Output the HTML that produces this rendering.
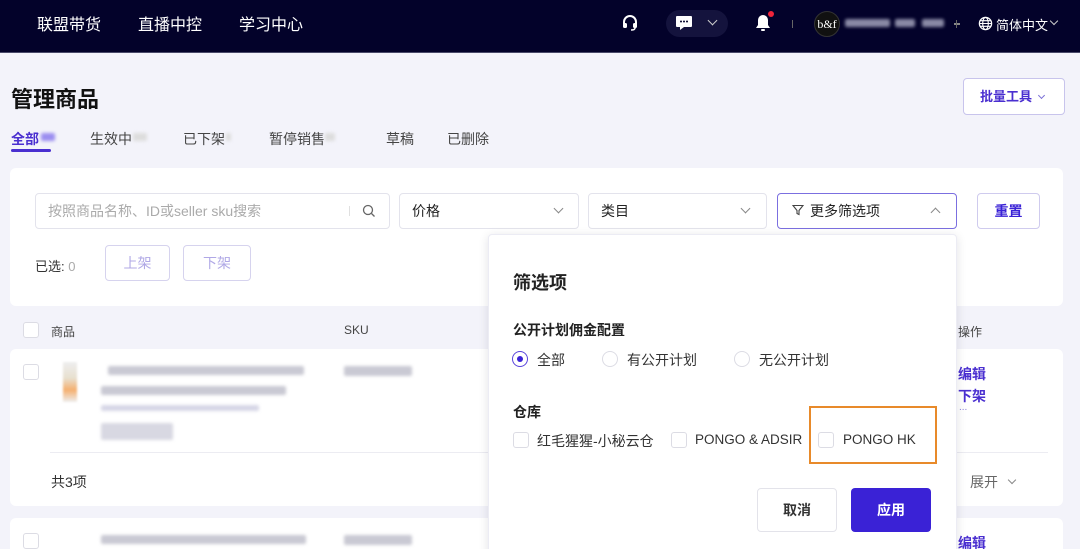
<!DOCTYPE html>
<html><head><meta charset="utf-8"><style>
*{box-sizing:border-box;margin:0;padding:0}
html,body{width:1080px;height:549px;overflow:hidden}
body{background:#f3f3fa;font-family:"Liberation Sans","Noto Sans CJK SC",sans-serif;color:#222;position:relative;font-size:14px}
.a{position:absolute;white-space:nowrap}
.nav{position:absolute;left:0;top:0;width:1080px;height:53px;background:#03022a;border-bottom:1px solid #4a4a6a}
.nav .t{color:#fff;font-size:16px;top:11px}
.card{position:absolute;background:#fff;border-radius:6px}
.inp{position:absolute;height:36px;border:1px solid #e3e3ec;border-radius:4px;background:#fff;font-size:14px;padding:0 12px;line-height:34px}
.btn{position:absolute;border:1px solid #d6d3ee;border-radius:4px;text-align:center;background:#fff}
.blur{position:absolute;background:#c9c9d3;border-radius:2px;filter:blur(1.5px)}
.cb{position:absolute;width:16px;height:16px;border:1px solid #dcdce4;border-radius:3px;background:#fff}
.rd{position:absolute;width:16px;height:16px;border:1px solid #dcdce4;border-radius:50%;background:#fff}
.chev{position:absolute;display:block;width:7px;height:7px;border-right:1.3px solid #888;border-bottom:1.3px solid #888;transform:rotate(45deg)}
.up{transform:rotate(225deg)}
</style></head><body>
<div class="nav">
<div class="a t" style="left:37px">联盟带货</div>
<div class="a t" style="left:138px">直播中控</div>
<div class="a t" style="left:239px">学习中心</div>
<svg class="a" style="left:622px;top:14px" width="16" height="18" viewBox="0 0 16 18"><path d="M2 10V8a6 6 0 0112 0v2" stroke="#fff" stroke-width="2" fill="none"/><rect x="1" y="9" width="4" height="5" rx="1.5" fill="#fff"/><rect x="11" y="9" width="4" height="5" rx="1.5" fill="#fff"/><path d="M13 14q0 2-4 2" stroke="#fff" stroke-width="1.5" fill="none"/></svg>
<div class="a" style="left:666px;top:10px;width:62px;height:27px;border-radius:14px;background:#14133d"></div>
<svg class="a" style="left:675px;top:15px" width="18" height="16" viewBox="0 0 18 16"><path d="M2 1h14a1 1 0 011 1v9a1 1 0 01-1 1H9l-4 3v-3H2a1 1 0 01-1-1V2a1 1 0 011-1z" fill="#fff"/><circle cx="6" cy="6.5" r="1" fill="#03022a"/><circle cx="9" cy="6.5" r="1" fill="#03022a"/><circle cx="12" cy="6.5" r="1" fill="#03022a"/></svg>
<span class="chev" style="left:709px;top:17px;border-color:#ccc"></span>
<svg class="a" style="left:755px;top:13px" width="16" height="20" viewBox="0 0 16 20"><path d="M8 2a5 5 0 015 5v5l2 3H1l2-3V7a5 5 0 015-5z" fill="#fff"/><rect x="6" y="16" width="4" height="2" rx="1" fill="#fff"/></svg>
<div class="a" style="left:768px;top:11px;width:6px;height:6px;border-radius:50%;background:#f0243a"></div>
<div class="a" style="left:792px;top:20px;width:1px;height:8px;background:#666"></div>
<div class="a" style="left:814px;top:11px;width:26px;height:26px;border-radius:50%;background:#111;border:1px solid #333;color:#fff;font-size:12px;text-align:center;line-height:24px;font-family:'Liberation Serif',serif">b&amp;f</div>
<div class="blur" style="left:845px;top:19px;width:45px;height:8px;background:#8a8aa6"></div>
<div class="blur" style="left:895px;top:19px;width:20px;height:8px;background:#8a8aa6"></div>
<div class="blur" style="left:922px;top:19px;width:22px;height:8px;background:#8a8aa6"></div>
<div class="a" style="left:954px;top:23px;width:6px;height:2px;background:#888"></div>
<div class="a" style="left:956px;top:20px;width:1px;height:8px;background:#666"></div>
<svg class="a" style="left:978px;top:16px" width="15" height="15" viewBox="0 0 16 16"><circle cx="8" cy="8" r="6.5" stroke="#fff" stroke-width="1.4" fill="none"/><ellipse cx="8" cy="8" rx="3" ry="6.5" stroke="#fff" stroke-width="1.2" fill="none"/><path d="M1.5 8h13M2.5 5h11M2.5 11h11" stroke="#fff" stroke-width="1.1"/></svg>
<div class="a" style="left:996px;top:15px;color:#fff;font-size:13px">简体中文</div>
<span class="chev" style="left:1051px;top:18px;width:6px;height:6px;border-color:#ccc"></span>
</div>

<div class="a" style="left:11px;top:82px;font-size:22px;font-weight:bold;color:#111">管理商品</div>
<div class="btn" style="left:963px;top:78px;width:102px;height:37px;line-height:35px;color:#4a2fd0;font-weight:bold;font-size:13px;border-color:#c8c4ec;text-align:left;padding-left:16px">批量工具</div>
<span class="chev" style="left:1039px;top:93px;width:5px;height:5px;border-color:#7a70d6"></span>
<div class="a" style="left:11px;top:129px;color:#4a2fd0;font-size:14px;font-weight:bold">全部</div>
<div class="blur" style="left:41px;top:133px;width:14px;height:8px;background:#9b8ef0"></div>
<div class="a" style="left:11px;top:149px;width:40px;height:3px;background:#4a2fd0;border-radius:2px"></div>
<div class="a" style="left:90px;top:129px;color:#444">生效中</div><div class="blur" style="left:133px;top:133px;width:14px;height:8px;background:#ddd"></div>
<div class="a" style="left:183px;top:129px;color:#444">已下架</div><div class="blur" style="left:226px;top:133px;width:5px;height:8px;background:#ddd"></div>
<div class="a" style="left:269px;top:129px;color:#444">暂停销售</div><div class="blur" style="left:325px;top:133px;width:10px;height:8px;background:#ddd"></div>
<div class="a" style="left:386px;top:129px;color:#444">草稿</div>
<div class="a" style="left:447px;top:129px;color:#444">已删除</div>

<div class="card" style="left:10px;top:168px;width:1053px;height:138px"></div>
<div class="inp" style="left:35px;top:193px;width:355px;color:#aaa">按照商品名称、ID或seller sku搜索</div>
<div class="a" style="left:349px;top:206px;width:1px;height:10px;background:#e0e0e0"></div>
<svg class="a" style="left:362px;top:204px" width="14" height="14" viewBox="0 0 14 14"><circle cx="6" cy="6" r="4.5" stroke="#666" stroke-width="1.3" fill="none"/><path d="M9.5 9.5l3 3" stroke="#666" stroke-width="1.3"/></svg>
<div class="inp" style="left:399px;top:193px;width:180px">价格</div>
<span class="chev" style="left:555px;top:205px"></span>
<div class="inp" style="left:588px;top:193px;width:179px">类目</div>
<span class="chev" style="left:742px;top:205px"></span>
<div class="inp" style="left:777px;top:193px;width:180px;border-color:#7b6fe0;padding-left:14px"><svg width="12" height="12" viewBox="0 0 12 12" style="margin-right:6px"><path d="M1 1.5h10L7 6.5v4l-2-1v-3z" stroke="#444" stroke-width="1.1" fill="none"/></svg>更多筛选项</div>
<span class="chev up" style="left:932px;top:209px"></span>
<div class="btn" style="left:977px;top:193px;width:63px;height:36px;line-height:34px;color:#3a22d6;font-weight:bold;border-color:#cfcbee">重置</div>
<div class="a" style="left:35px;top:256px;font-size:13px;color:#333">已选: <span style="color:#aaa">0</span></div>
<div class="btn" style="left:105px;top:245px;width:65px;height:36px;line-height:34px;color:#b0a8e6">上架</div>
<div class="btn" style="left:183px;top:245px;width:68px;height:36px;line-height:34px;color:#b0a8e6">下架</div>

<div class="cb" style="left:23px;top:322px"></div>
<div class="a" style="left:51px;top:323px;font-size:12px;color:#444">商品</div>
<div class="a" style="left:344px;top:323px;font-size:12px;color:#444">SKU</div>
<div class="a" style="left:958px;top:323px;font-size:12px;color:#444">操作</div>

<div class="card" style="left:10px;top:349px;width:1053px;height:157px"></div>
<div class="cb" style="left:23px;top:364px"></div>
<div class="a" style="left:63px;top:362px;width:14px;height:40px;background:linear-gradient(#eee 0,#e8e0d0 40%,#f5b070 70%,#eee);filter:blur(1px)"></div>
<div class="blur" style="left:108px;top:366px;width:196px;height:9px"></div>
<div class="blur" style="left:101px;top:386px;width:185px;height:9px"></div>
<div class="blur" style="left:101px;top:405px;width:158px;height:6px;background:#d6d6e6"></div>
<div class="blur" style="left:101px;top:423px;width:72px;height:17px;background:#d8d8e2"></div>
<div class="blur" style="left:344px;top:366px;width:68px;height:10px"></div>
<div class="a" style="left:958px;top:364px;color:#4a2fd0;font-weight:bold">编辑</div>
<div class="a" style="left:958px;top:386px;color:#4a2fd0;font-weight:bold">下架</div>
<div class="a" style="left:959px;top:402px;color:#8a80d8;font-size:10px">...</div>
<div class="a" style="left:50px;top:452px;width:998px;height:1px;background:#ececf2"></div>
<div class="a" style="left:51px;top:472px;color:#333">共3项</div>
<div class="a" style="left:970px;top:472px;color:#666">展开</div>
<span class="chev" style="left:1009px;top:477px;width:6px;height:6px"></span>

<div class="card" style="left:10px;top:518px;width:1053px;height:40px"></div>
<div class="cb" style="left:23px;top:533px"></div>
<div class="blur" style="left:101px;top:535px;width:205px;height:9px"></div>
<div class="blur" style="left:344px;top:535px;width:68px;height:10px"></div>
<div class="a" style="left:958px;top:533px;color:#4a2fd0;font-weight:bold">编辑</div>

<div class="card" style="left:488px;top:234px;width:469px;height:330px;border-radius:4px;box-shadow:0 2px 10px rgba(0,0,40,.12);border:1px solid #ececf4"></div>
<div class="a" style="left:513px;top:269px;font-size:18px;font-weight:bold;color:#222">筛选项</div>
<div class="a" style="left:513px;top:320px;font-size:14px;font-weight:bold;color:#222">公开计划佣金配置</div>
<div class="rd" style="left:512px;top:351px;border-color:#5a45dc;border-width:1.5px"></div>
<div class="a" style="left:517px;top:356px;width:6px;height:6px;border-radius:50%;background:#3a22d6"></div>
<div class="a" style="left:537px;top:350px;color:#333">全部</div>
<div class="rd" style="left:602px;top:351px"></div>
<div class="a" style="left:627px;top:350px;color:#333">有公开计划</div>
<div class="rd" style="left:734px;top:351px"></div>
<div class="a" style="left:759px;top:350px;color:#333">无公开计划</div>
<div class="a" style="left:513px;top:402px;font-size:14px;font-weight:bold;color:#222">仓库</div>
<div class="cb" style="left:513px;top:432px"></div>
<div class="a" style="left:537px;top:431px;color:#333">红毛猩猩-小秘云仓</div>
<div class="cb" style="left:671px;top:432px"></div>
<div class="a" style="left:695px;top:432px;color:#333;font-size:13.5px">PONGO &amp; ADSIR</div>
<div class="a" style="left:809px;top:406px;width:128px;height:58px;border:2px solid #e88a2a"></div>
<div class="cb" style="left:818px;top:432px"></div>
<div class="a" style="left:843px;top:432px;color:#333;font-size:13.5px">PONGO HK</div>
<div class="btn" style="left:757px;top:488px;width:80px;height:44px;line-height:42px;color:#333;font-weight:bold;border-color:#e3e3ea">取消</div>
<div class="a" style="left:851px;top:488px;width:80px;height:44px;line-height:44px;text-align:center;background:#3a22d6;color:#fff;font-weight:bold;border-radius:4px">应用</div>
</body></html>
